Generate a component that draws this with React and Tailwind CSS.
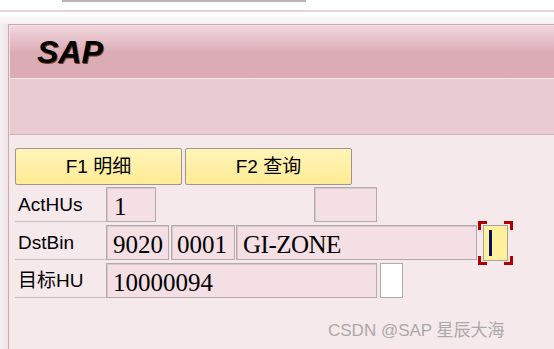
export default function App() {
  const sans = { fontFamily: '"Liberation Sans", "Noto Sans CJK SC", sans-serif' };
  const serif = { fontFamily: '"Liberation Serif", "Noto Sans CJK SC", serif' };
  const field = "h-[35px] bg-[#f4dfe4] border border-[#b3aaac] shadow-[inset_1px_1px_0_#d8c8cc] flex items-center pt-[3px] text-[25px] text-black leading-none";
  const label = "w-[91px] h-[35px] border-b border-[#c9bdc0] flex items-center pl-[3px] pt-[3px] text-[19px] text-black";
  return (
    <div className="w-[554px] h-[349px] bg-white overflow-hidden relative flex flex-col" style={sans}>
      <div className="h-[10px] shrink-0 bg-white">
        <div className="ml-[62px] w-[244px] h-[2px] bg-[#b8b4b5]" />
      </div>
      <div className="h-[2px] shrink-0 bg-[#e5d6da]" />
      <div className="h-[12px] shrink-0 bg-gradient-to-b from-white to-[#f8f1f3]" />
      <div className="flex-1 flex min-h-0">
        <div className="w-[8px] shrink-0 bg-gradient-to-r from-[#f6f0f2] to-[#f1e6e9]" />
        <div className="flex-1 flex flex-col border-l border-t border-[#c9a9b1]">
          <div className="h-[53px] shrink-0 border-l border-t border-[#f4e2e6] bg-gradient-to-b from-[#f1d7dd] via-[#dcacb6] via-50% to-[#dcacb6] flex items-center pl-[27px]">
            <span className="text-[32px] font-bold italic text-black leading-none [text-shadow:1px_1px_0_#7a3b10]">SAP</span>
          </div>
          <div className="h-[57px] shrink-0 border-t border-l border-[#f5e5e9] border-b-[#cfb1b8] border-b bg-[#e9cbd3]" />
          <div className="flex-1 bg-[#f5e9ec] pl-[6px] pt-[13px] flex flex-col">
            <div className="flex gap-[3px]">
              <div className="w-[167px] h-[37px] rounded-[2px] border border-[#9b9690] bg-gradient-to-b from-[#fff5b8] to-[#ffeb94] flex items-center justify-center pt-[1px] text-[19px] text-black">
                F1 明细
              </div>
              <div className="w-[167px] h-[37px] rounded-[2px] border border-[#9b9690] bg-gradient-to-b from-[#fff5b8] to-[#ffeb94] flex items-center justify-center pt-[1px] text-[19px] text-black">
                F2 查询
              </div>
            </div>
            <div className="flex flex-col gap-[3px] mt-[2px]">
              <div className="flex items-center h-[35px]">
                <div className={label}>ActHUs</div>
                <div className={`${field} w-[50px] pl-[7px]`} style={serif}>1</div>
                <div className={`${field} w-[63px] ml-[158px]`} />
              </div>
              <div className="flex items-center h-[35px]">
                <div className={label}>DstBin</div>
                <div className={`${field} w-[63px] pl-[6px]`} style={serif}>9020</div>
                <div className={`${field} w-[64px] ml-[2px] pl-[5px]`} style={serif}>0001</div>
                <div className={`${field} w-[241px] ml-[1px] pl-[6px] tracking-[-0.5px]`} style={serif}>GI-ZONE</div>
                <div className="relative ml-[6px] w-[25px] h-[36px] bg-[#fff09c] border border-[#a8a39a] flex items-center pl-[5px]">
                  <div className="w-[3px] h-[26px] bg-[#0a1060]" />
                  <div className="absolute left-[-6px] top-[-5px] w-[9px] h-[9px] border-l-[3px] border-t-[3px] border-[#b00000]" />
                  <div className="absolute right-[-6px] top-[-5px] w-[9px] h-[9px] border-r-[3px] border-t-[3px] border-[#b00000]" />
                  <div className="absolute left-[-6px] bottom-[-5px] w-[9px] h-[9px] border-l-[3px] border-b-[3px] border-[#b00000]" />
                  <div className="absolute right-[-6px] bottom-[-5px] w-[9px] h-[9px] border-r-[3px] border-b-[3px] border-[#b00000]" />
                </div>
              </div>
              <div className="flex items-center h-[35px]">
                <div className={label}>目标HU</div>
                <div className={`${field} w-[271px] pl-[6px]`} style={serif}>10000094</div>
                <div className="w-[23px] h-[35px] ml-[3px] bg-white border border-[#b3aaac]" />
              </div>
            </div>
          </div>
        </div>
      </div>
      <div className="absolute left-[328px] top-[322px] text-[17px] text-[#a9a9a9] leading-none whitespace-nowrap">CSDN @SAP 星辰大海</div>
    </div>
  );
}
